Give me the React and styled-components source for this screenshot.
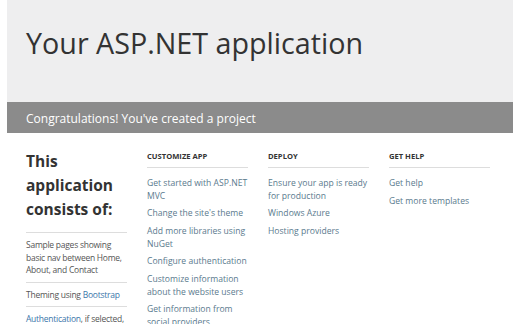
import React from "react";
import styled, { createGlobalStyle } from "styled-components";

const Global = createGlobalStyle`
  body {
    margin: 0;
    background: #fff;
    font-family: "Open Sans", "Noto Sans", sans-serif;
    color: #555;
  }
`;

const Jumbotron = styled.div`
  margin: 0 7px;
  height: 102px;
  background: #eeeeef;
  padding: 25px 19px 0;
  box-sizing: border-box;
`;

const Title = styled.h1`
  margin: 0;
  font-size: 28.7px;
  font-weight: 400;
  line-height: 36px;
  color: #333;
`;

const Banner = styled.div`
  margin: 0 7px;
  height: 31px;
  background: #8b8b8b;
  color: #fff;
  font-size: 12px;
  line-height: 31px;
  padding: 1px 19px 0;
  box-sizing: border-box;
`;

const Main = styled.div`
  display: grid;
  grid-template-columns: repeat(4, 101px);
  column-gap: 20px;
  padding: 17px 0 0 26px;
`;

const Lead = styled.h2`
  margin: -1px 0 11px;
  font-size: 15.5px;
  line-height: 24px;
  font-weight: 700;
  color: #333;
`;

const FeatureList = styled.ul`
  list-style: none;
  margin: 0;
  padding: 0;
  border-top: 1px solid #ddd;
`;

const Feature = styled.li`
  font-size: 8.5px;
  line-height: 12.5px;
  letter-spacing: -0.25px;
  padding: 6px 0 5px;
  border-bottom: 1px solid #ddd;
`;

const Link = styled.a`
  color: ${(p) => (p.strong ? "#3a76aa" : "#5a7a8e")};
  text-decoration: none;
`;

const ColHead = styled.h4`
  margin: 0;
  font-size: 7.6px;
  font-weight: 700;
  color: #333;
  text-transform: uppercase;
  line-height: 12px;
  padding: 0 0 5px;
  border-bottom: 1px solid #ddd;
`;

const Links = styled.ul`
  list-style: none;
  margin: 0;
  padding: 9px 0 0;
  display: flex;
  flex-direction: column;
  gap: 5.3px;
`;

const LinkItem = styled.li`
  font-size: 8.6px;
  line-height: 12.5px;
`;

const columns = [
  {
    title: "Customize app",
    links: [
      "Get started with ASP.NET MVC",
      "Change the site's theme",
      "Add more libraries using NuGet",
      "Configure authentication",
      "Customize information about the website users",
      "Get information from social providers",
    ],
  },
  {
    title: "Deploy",
    links: [
      "Ensure your app is ready for production",
      "Windows Azure",
      "Hosting providers",
    ],
  },
  {
    title: "Get help",
    links: ["Get help", "Get more templates"],
  },
];

export default function App() {
  return (
    <>
      <Global />
      <Jumbotron>
        <Title>Your ASP.NET application</Title>
      </Jumbotron>
      <Banner>Congratulations! You've created a project</Banner>
      <Main>
        <div>
          <Lead>This application consists of:</Lead>
          <FeatureList>
            <Feature>
              Sample pages showing basic nav between Home, About, and Contact
            </Feature>
            <Feature>
              Theming using <Link strong>Bootstrap</Link>
            </Feature>
            <Feature>
              <Link strong>Authentication</Link>, if selected, shows how to
              register and sign in
            </Feature>
          </FeatureList>
        </div>
        {columns.map((c) => (
          <div key={c.title}>
            <ColHead>{c.title}</ColHead>
            <Links>
              {c.links.map((l) => (
                <LinkItem key={l}>
                  <Link>{l}</Link>
                </LinkItem>
              ))}
            </Links>
          </div>
        ))}
      </Main>
    </>
  );
}
